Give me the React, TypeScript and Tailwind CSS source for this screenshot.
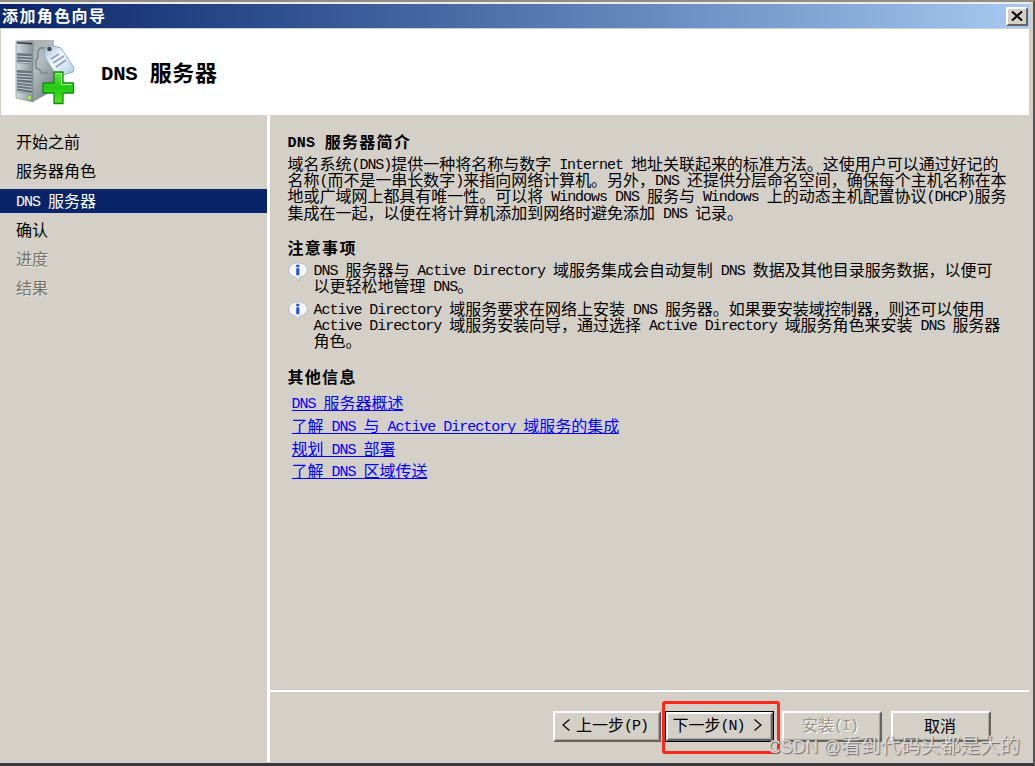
import type { ReactNode } from 'react'

const steps = [
  { label: '开始之前', state: 'done' },
  { label: '服务器角色', state: 'done' },
  { label: 'DNS 服务器', state: 'current' },
  { label: '确认', state: 'done' },
  { label: '进度', state: 'disabled' },
  { label: '结果', state: 'disabled' },
]

const introLines = [
  '域名系统(DNS)提供一种将名称与数字 Internet 地址关联起来的标准方法。这使用户可以通过好记的',
  '名称(而不是一串长数字)来指向网络计算机。另外，DNS 还提供分层命名空间，确保每个主机名称在本',
  '地或广域网上都具有唯一性。可以将 Windows DNS 服务与 Windows 上的动态主机配置协议(DHCP)服务',
  '集成在一起，以便在将计算机添加到网络时避免添加 DNS 记录。',
]

const notes = [
  [
    'DNS 服务器与 Active Directory 域服务集成会自动复制 DNS 数据及其他目录服务数据，以便可',
    '以更轻松地管理 DNS。',
  ],
  [
    'Active Directory 域服务要求在网络上安装 DNS 服务器。如果要安装域控制器，则还可以使用',
    'Active Directory 域服务安装向导，通过选择 Active Directory 域服务角色来安装 DNS 服务器',
    '角色。',
  ],
]

const links = ['DNS 服务器概述', '了解 DNS 与 Active Directory 域服务的集成', '规划 DNS 部署', '了解 DNS 区域传送']

// Latin runs are set half as wide as the Chinese characters
function Mixed({ text, latin = 'tracking-[-1.02px]' }: { text: string; latin?: string }) {
  return (
    <>
      {text.split(/([\x20-\x7e]+)/).map((part, i) =>
        i % 2 === 1 ? (
          <span key={i} className={`align-[1px] font-['Liberation_Mono',monospace] text-[0.9375em] leading-none ${latin}`}>
            {part}
          </span>
        ) : (
          part
        )
      )}
    </>
  )
}

function Lines({ lines }: { lines: string[] }) {
  return (
    <div>
      {lines.map((line) => (
        <p key={line} className="h-[16.2px] leading-[16px] tracking-[-0.02px] whitespace-pre">
          <Mixed text={line} />
        </p>
      ))}
    </div>
  )
}

function Heading({ children }: { children: string }) {
  return (
    <h2 className="h-5 text-[16px] leading-5 font-bold tracking-[1.3px] whitespace-pre">
      <Mixed text={children} latin="tracking-[0.3px]" />
    </h2>
  )
}

function InfoIcon() {
  return (
    <svg className="mt-px h-5 w-5 shrink-0" viewBox="0 0 20 20">
      <path d="M10 .8C4.700.8.6 4 .6 8.100c0 3.500 3 6.300 7.100 7.100l3.400 4v-4c4.600-.4 8.300-3.300 8.300-7.100C19.400 4 15.300.8 10 .8z" fill="#f4f5f7" stroke="#b6b8bb" strokeWidth="1" />
      <path d="M8.300 2.800h3v2.400h-3zM8.300 6.300h3v7h-3z" fill="#1c50d4" />
    </svg>
  )
}

function ServerIcon() {
  return (
    <svg className="h-[66px] w-[62px]" viewBox="0 0 62 66">
      <defs>
        <linearGradient id="side" x1="0" y1="0" x2="1" y2="1">
          <stop offset="0" stopColor="#929da1" />
          <stop offset="0.5" stopColor="#b5bdbf" />
          <stop offset="1" stopColor="#677176" />
        </linearGradient>
        <linearGradient id="front" x1="0" y1="0" x2="1" y2="0">
          <stop offset="0" stopColor="#d5dde0" />
          <stop offset="1" stopColor="#87949a" />
        </linearGradient>
        <linearGradient id="tag" x1="0" y1="0" x2="1" y2="1">
          <stop offset="0" stopColor="#9bb9cd" />
          <stop offset="0.45" stopColor="#f5fbff" />
          <stop offset="1" stopColor="#a8cade" />
        </linearGradient>
        <linearGradient id="plus" x1="0" y1="0" x2="0" y2="1">
          <stop offset="0" stopColor="#62e345" />
          <stop offset="0.5" stopColor="#24c918" />
          <stop offset="1" stopColor="#51e51e" />
        </linearGradient>
      </defs>
      <path d="M1 2L17 1h22v50L18 63z" fill="url(#side)" />
      <path d="M1 2l17 1v60L1 59z" fill="url(#front)" stroke="#758187" strokeWidth=".6" />
      <path d="M2 3l15 1v1.500L2 4.500z" fill="#30373b" />
      <path d="M2 14l15 1v10L2 24zM2 31l15 1v24L2 53z" fill="#68747b" />
      <path d="M2 17l15 1M2 20l15 1M2 23l15 1M2 34l15 1M2 37l15 1M2 40l15 1M2 43l15 2M2 46l15 2M2 49l15 2M2 52l15 3" stroke="#c3cdd2" strokeWidth="1" />
      <rect x="13" y="57" width="3" height="3" rx="1" fill="#9cff1b" />
      <path d="M34 9h-9l-2 3v6l-2 3v8l4 2 1 3h7" fill="none" stroke="#7c878d" strokeWidth="1.500" />
      <path d="M30 9l5-3 11 3 13 20-1 4-13 4-5-3-11-17z" fill="url(#tag)" stroke="#8eacbe" strokeWidth="1" />
      <circle cx="34.500" cy="10" r="2.300" fill="#42494e" />
      <path d="M36 20l8-5M38 24l11-7M41 28l10-7" stroke="#8d9fca" strokeWidth="1.700" />
      <path d="M39 33h9v11h10.500v10H48v10.500h-9V54H28V44h11z" fill="url(#plus)" stroke="#138c0c" strokeWidth="1.300" strokeLinejoin="round" />
      <path d="M40.500 34.500h6v11H57" fill="none" stroke="#a4f48d" strokeWidth="1" />
    </svg>
  )
}

function Chevron({ left }: { left?: boolean }) {
  return (
    <svg className="h-3 w-2 shrink-0" viewBox="0 0 8 12" fill="none" stroke="currentColor" strokeWidth="1.200">
      <path d={left ? 'M7.500 .5L1 6l6.500 5.500' : 'M.5 .5L7 6 .5 11.500'} />
    </svg>
  )
}

function Button({ children, className = '' }: { children: ReactNode; className?: string }) {
  return (
    <button
      className={`flex items-center justify-center border-2 border-t-white border-r-[#66645f] border-b-[#66645f] border-l-white bg-[#d4d0c8] pb-[3px] leading-4 whitespace-pre shadow-[inset_-1px_-1px_#aaa69e] ${className}`}
    >
      {children}
    </button>
  )
}

export default function App() {
  return (
    <div className="relative flex h-[766px] w-[1035px] flex-col overflow-hidden border-t-2 border-r-2 border-b-[3px] border-t-[#918e88] border-r-[#55555a] border-b-[#39383a] bg-[#d4d0c8] font-['Noto_Sans_CJK_SC',sans-serif] text-[16px] text-black">
      {/* Title bar */}
      <div className="flex h-[27px] shrink-0 items-center justify-between border-t-2 border-r-4 border-b border-t-[#eeece8] border-[#d4d0c8] bg-linear-to-r from-[#0a246a] to-[#a6caf0] pl-0.5">
        <h1 className="pb-0.5 text-[16px] leading-6 font-bold tracking-[1.4px] text-white">添加角色向导</h1>
        <button className="mr-px flex h-[19px] w-[22px] items-center justify-center border-2 border-t-white border-r-[#66645f] border-b-[#66645f] border-l-white bg-[#d4d0c8]">
          <svg className="h-[10px] w-[12px]" viewBox="0 0 12 10" stroke="black" strokeWidth="2">
            <path d="M1 .5l10 9M11 .5l-10 9" />
          </svg>
        </button>
      </div>

      {/* Header */}
      <div className="mr-1 flex h-[86px] shrink-0 items-center border-l border-[#d4d0c8] bg-white pl-3.5">
        <ServerIcon />
        <div className="ml-6 pb-0.5 text-[22px] leading-8 font-bold tracking-[0.7px] whitespace-pre">
          <Mixed text="DNS 服务器" latin="tracking-[-0.2px]" />
        </div>
      </div>

      <div className="flex min-h-0 flex-1">
        {/* Steps */}
        <nav className="flex w-[267px] shrink-0 flex-col gap-[5.300px] pt-[15px]">
          {steps.map((step) => (
            <div
              key={step.label}
              className={`h-6 pl-4 leading-[23px] whitespace-pre ${
                step.state === 'current'
                  ? 'bg-[#0a246a] text-white'
                  : step.state === 'disabled'
                    ? 'text-[#77746a] [text-shadow:1px_1px_#e9e6df]'
                    : ''
              }`}
            >
              <Mixed text={step.label} />
            </div>
          ))}
        </nav>
        <div className="mb-px w-[3px] shrink-0 bg-white" />

        <main className="flex min-w-0 flex-1 flex-col">
          <div className="flex-1 pt-4 pl-[17.500px]">
            <Heading>DNS 服务器简介</Heading>
            <div className="mt-1">
              <Lines lines={introLines} />
            </div>

            <div className="mt-[17px]">
              <Heading>注意事项</Heading>
            </div>
            <div className="mt-1 flex flex-col gap-[6.500px]">
              {notes.map((lines) => (
                <div key={lines[0]} className="flex gap-[6px]">
                  <InfoIcon />
                  <Lines lines={lines} />
                </div>
              ))}
            </div>

            <div className="mt-[18px]">
              <Heading>其他信息</Heading>
            </div>
            <div className="mt-2 flex flex-col items-start gap-[5.700px] pl-1">
              {links.map((link) => (
                <a key={link} href="#" className="h-[17px] border-b border-[#0000ff] leading-4 whitespace-pre text-[#0000ff]">
                  <Mixed text={link} />
                </a>
              ))}
            </div>
          </div>

          {/* Buttons */}
          <footer className="mr-1 flex h-[73px] shrink-0 items-start border-t-2 border-white pl-[283px]">
            <Button className="mt-[19px] h-[31px] w-[108px] pr-1">
              <Chevron left />
              <span className="ml-1.5">
                <Mixed text="上一步(P)" />
              </span>
            </Button>
            <div className="mt-[9px] ml-px h-[53px] w-[118px] rounded-[3px] border-3 border-[#fb281d] pt-[7px]">
              <div className="w-[109px] border border-black">
                <Button className="h-[29px] w-[107px] pr-1">
                  <span className="mr-2.5">
                    <Mixed text="下一步(N)" />
                  </span>
                  <Chevron />
                </Button>
              </div>
            </div>
            <Button className="mt-[19px] ml-[2px] h-[31px] w-[100px] pr-1 text-[#98958d] [text-shadow:1px_1px_white]">
              <span>
                <Mixed text="安装(I)" />
              </span>
            </Button>
            <Button className="mt-[19px] ml-[9px] h-[31px] w-[100px] pr-0.5">
              <span>取消</span>
            </Button>
          </footer>
        </main>
      </div>

      {/* Watermark */}
      <div className="absolute top-[729px] left-[768px] text-[19.900px] leading-7 whitespace-pre text-[#dddad6] [text-shadow:1px_1px_1px_#6a686c]">
        <span className="font-['Liberation_Sans',sans-serif] text-[17.700px]">CSDN @</span>看到代码头都是大的
      </div>
    </div>
  )
}
